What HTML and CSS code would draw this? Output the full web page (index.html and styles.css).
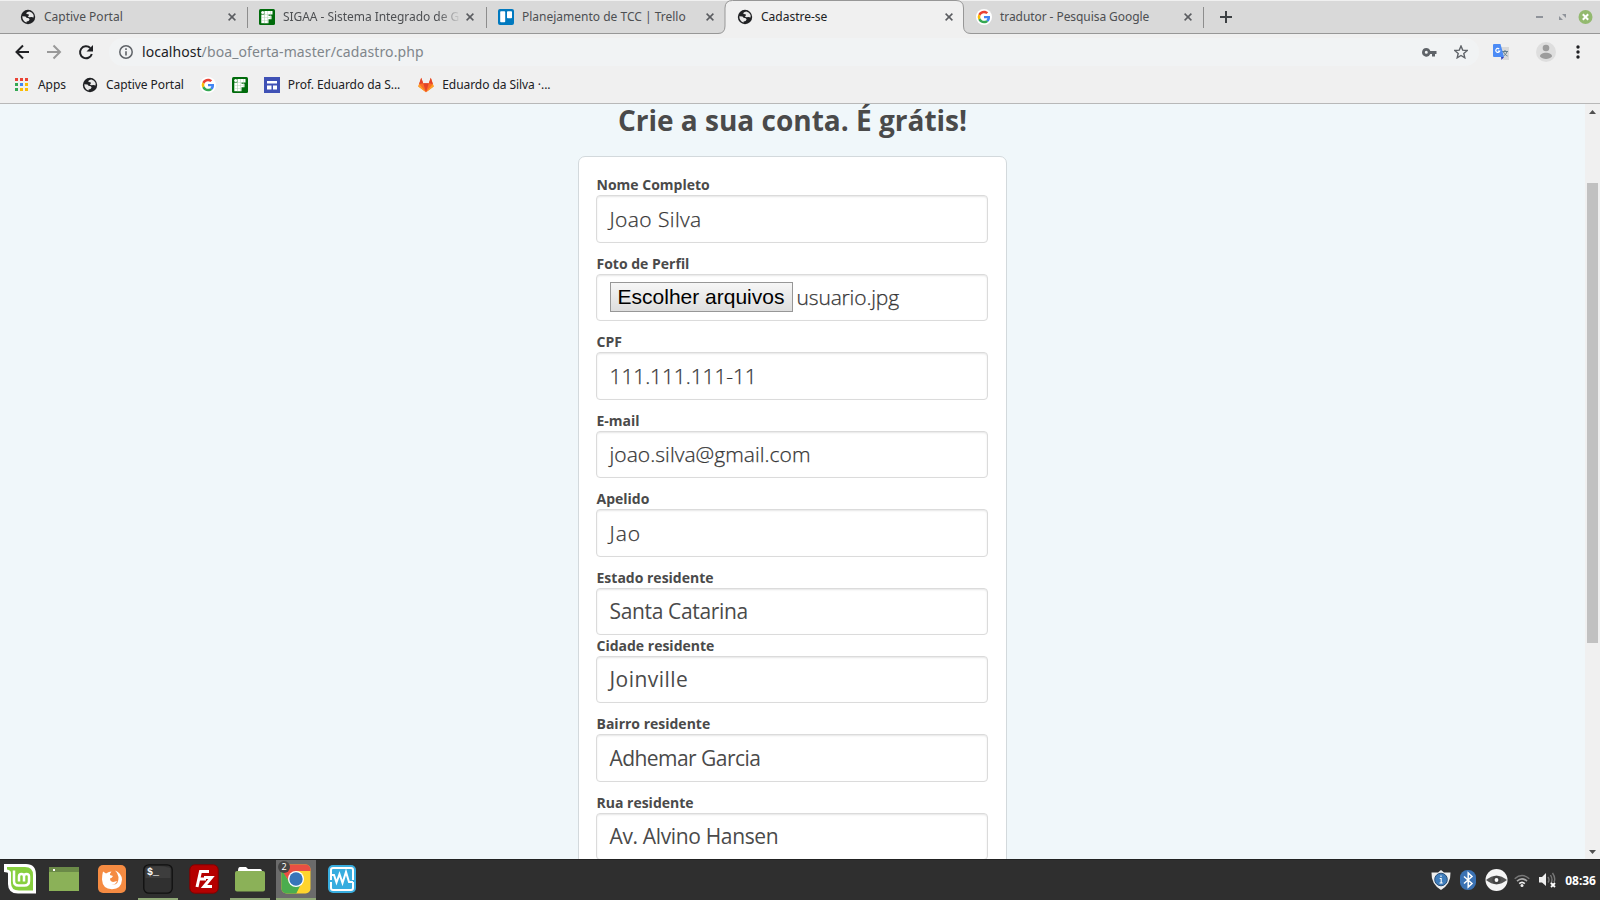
FILE: index.html
```html
<!DOCTYPE html>
<html lang="pt-BR">
<head>
<meta charset="utf-8">
<title>Cadastre-se</title>
<link rel="stylesheet" href="styles.css">
</head>
<body>
<svg class="defs" width="0" height="0">
  <symbol id="globe" viewBox="0 0 16 16"><circle cx="8" cy="8" r="7.200" fill="#202124"/><path d="M9.300 2.500C6.800 3 6 4 6.500 5L8.500 5.200 9 6.300 7.800 7.400 9.500 8.300 11.500 8 13.600 8.500V6L12 3.800zM2.300 7.300L5.500 7.400 6.500 8.800 8.800 9.200 9.600 10.600 8.600 12 6.600 12.400 6.600 13.600C4 12.800 2.200 10.500 2.300 7.300z" fill="#e8e8e8"/></symbol>
  <symbol id="if" viewBox="0 0 16 16"><rect width="16" height="16" rx="1.500" fill="#006b0b"/><path d="M5.500 2h8v3.500h-4v1.300h3v3.400h-3v4h-4z" fill="#fff"/><circle cx="3.700" cy="3.500" r="1.600" fill="#fff"/><path d="M2.300 5.700h3.500v8.500H2.300z" fill="#fff"/><path d="M5.500 2v12M8.500 2v12M2.500 5.500h8M2.500 8.500h9M2.500 11.500h7M11.500 2v8" stroke="#a8cfac" stroke-width=".4"/></symbol>
  <symbol id="google" viewBox="0 0 48 48"><circle cx="24" cy="24" r="24" fill="#fff"/><g transform="translate(5 5) scale(.79)"><path fill="#EA4335" d="M24 9.500c3.540 0 6.710 1.220 9.210 3.600l6.850-6.850C35.900 2.380 30.470 0 24 0 14.620 0 6.510 5.380 2.560 13.220l7.980 6.190C12.430 13.720 17.740 9.500 24 9.500z"/><path fill="#4285F4" d="M46.980 24.550c0-1.570-.15-3.090-.38-4.550H24v9.020h12.940c-.58 2.960-2.260 5.480-4.780 7.180l7.730 6c4.510-4.180 7.090-10.360 7.090-17.650z"/><path fill="#FBBC05" d="M10.530 28.590A14.500 14.500 0 0 1 10.530 19.410l-7.980-6.190A24 24 0 0 0 2.560 34.780z"/><path fill="#34A853" d="M24 48c6.480 0 11.930-2.130 15.890-5.810l-7.730-6c-2.150 1.450-4.920 2.300-8.160 2.300-6.260 0-11.570-4.220-13.470-9.910l-7.980 6.190C6.510 42.620 14.620 48 24 48z"/></g></symbol>
  <symbol id="close" viewBox="0 0 8 8"><path d="M.6.600l6.800 6.800M7.400.600L.6 7.400" stroke="#5a5c60" stroke-width="1.500"/></symbol>
</svg>

<header class="browser">
  <div class="tabs">
    <div class="tab"><svg class="fav"><use href="#globe"/></svg><span class="tab-title">Captive Portal</span><svg class="x"><use href="#close"/></svg></div>
    <div class="tab"><svg class="fav"><use href="#if"/></svg><span class="tab-title long">SIGAA - Sistema Integrado de G</span><svg class="x"><use href="#close"/></svg></div>
    <div class="tab plain"><svg class="fav" viewBox="0 0 16 16"><rect width="16" height="16" rx="2" fill="#0079bf"/><rect x="2.200" y="2.200" width="5" height="11" rx=".8" fill="#fff"/><rect x="9" y="2.200" width="5" height="7" rx=".8" fill="#fff"/></svg><span class="tab-title">Planejamento de TCC | Trello</span><svg class="x"><use href="#close"/></svg></div>
    <div class="tab active"><svg class="shape" viewBox="0 0 253 34"><path d="M0 34V33.500Q7 33.500 7 26V8Q7 .5 14.500.5H238Q245.500.500 245.500 8V26Q245.500 33.500 253 33.500V34z" fill="#f0f0f0"/><path d="M0 33.500Q7 33.500 7 26V8Q7 .5 14.500.5H238Q245.500.500 245.500 8V26Q245.500 33.500 253 33.500" fill="none" stroke="#979797"/></svg><svg class="fav"><use href="#globe"/></svg><span class="tab-title">Cadastre-se</span><svg class="x"><use href="#close"/></svg></div>
    <div class="tab"><svg class="fav"><use href="#google"/></svg><span class="tab-title search">tradutor - Pesquisa Google</span><svg class="x"><use href="#close"/></svg></div>
    <svg class="plus" viewBox="0 0 12 12"><path d="M6 0v12M0 6h12" stroke="#3c4043" stroke-width="2"/></svg>
    <svg class="winctl" width="60" height="18" viewBox="0 0 60 18"><path d="M2 9h7" stroke="#8f939a" stroke-width="2"/><path d="M28 6h4v4zM25 8v4h4z" fill="#8f939a"/><circle cx="51.500" cy="9" r="7" fill="#93b96f"/><path d="M48.800 6.300l5.400 5.400M54.200 6.300l-5.400 5.400" stroke="#fff" stroke-width="2"/></svg>
  </div>
  <div class="toolbar">
    <svg class="nav" width="82" height="16" viewBox="0 0 82 16" fill="none" stroke-width="2"><path d="M15 8H2.500M9 1.500L2.500 8 9 14.500" stroke="#202124"/><path d="M33 8h12.500M39.500 1.500L46 8l-6.500 6.500" stroke="#999"/><path d="M76.300 4A6 6 0 1 0 77.800 10" stroke="#202124"/><path d="M79 1v6.500h-6.500z" fill="#202124"/></svg>
    <div class="omnibox">
      <svg width="14" height="14" viewBox="0 0 14 14"><circle cx="7" cy="7" r="6.200" fill="none" stroke="#5f6368" stroke-width="1.500"/><path d="M7 6.200v4.300M7 3.300v1.600" stroke="#5f6368" stroke-width="1.600"/></svg>
      <span class="url"><b>localhost</b>/boa_oferta-master/cadastro.php</span>
      <svg class="key" width="15" height="9" viewBox="0 0 15 9"><path fill="#5f6368" fill-rule="evenodd" d="M4.300 0A4.300 4.300 0 0 1 8.300 3H14.500V6H13V8.500H10V6H8.300A4.300 4.300 0 1 1 4.300 0zM4.300 2.800a1.500 1.500 0 1 0 0 3 1.500 1.500 0 0 0 0-3z"/></svg>
      <svg width="14" height="14" viewBox="0 0 14 14"><path d="M7 1l1.700 4.100 4.500.4-3.400 2.900 1 4.400L7 10.500l-3.800 2.300 1-4.400L.8 5.500l4.500-.4z" fill="none" stroke="#5f6368" stroke-width="1.400"/></svg>
    </div>
    <svg class="trans" width="16" height="16" viewBox="0 0 16 16"><path d="M6 3h10v13H10z" fill="#d9d9d9"/><path d="M9 7.500h6M12 6v1.500M14 7.500c-.5 2-2 3.700-3.500 4.500M10.500 8c1 2 2.500 3.500 4 4" stroke="#607d8b" fill="none"/><path d="M1 0h6.500L11 13H1Q0 13 0 12V1Q0 0 1 0z" fill="#4c8bf5"/><path d="M8 13h3l-2.500 3z" fill="#3040b8"/><path d="M6.200 5A2 2 0 1 0 6.700 7H4.800" fill="none" stroke="#fff" stroke-width="1.200"/></svg>
    <i class="divider"></i>
    <svg class="avatar" width="20" height="20" viewBox="0 0 20 20"><circle cx="10" cy="10" r="10" fill="#dedede"/><circle cx="10" cy="6" r="3.300" fill="#9c9c9c"/><path d="M4 14.500c0-5 12-5 12 0-2.500 3.300-9.500 3.300-12 0z" fill="#9c9c9c"/></svg>
    <svg width="4" height="14" viewBox="0 0 4 14" fill="#202124"><circle cx="2" cy="2" r="1.700"/><circle cx="2" cy="7" r="1.700"/><circle cx="2" cy="12" r="1.700"/></svg>
  </div>
  <nav class="bookmarks">
    <span class="bm apps"><svg width="13" height="13" viewBox="0 0 13 13"><path d="M0 0h3v3H0zM5 0h3v3H5zM10 0h3v3h-3z" fill="#ea4335"/><path d="M0 5h3v3H0z" fill="#34a853"/><path d="M5 5h3v3H5z" fill="#4285f4"/><path d="M10 5h3v3h-3z" fill="#fbbc05"/><path d="M0 10h3v3H0z" fill="#34a853"/><path d="M5 10h3v3H5zM10 10h3v3h-3z" fill="#fbbc05"/></svg>Apps</span>
    <span class="bm"><svg width="16" height="16"><use href="#globe"/></svg>Captive Portal</span>
    <span class="bm"><svg width="16" height="16"><use href="#google"/></svg></span>
    <span class="bm"><svg width="16" height="16"><use href="#if"/></svg></span>
    <span class="bm"><svg width="16" height="16" viewBox="0 0 16 16"><path d="M0 0h16v16H0z" fill="#3f51b5"/><path d="M3 4h10v2.500H3zM3 8.500h4.500v4H3zM9 8.500h4v4H9z" fill="#fff"/></svg>Prof. Eduardo da S...</span>
    <span class="bm gitlab"><svg width="16" height="16" viewBox="0 0 16 16"><path d="M8 15.300L.3 9.500 3.200.700 5.200 6.300h5.600L12.800.700l2.900 8.800z" fill="#fc6d26"/><path d="M8 15.300L5.200 6.300h5.600z" fill="#e24329"/><path d="M8 15.300L.3 9.500l.8-2.400zM8 15.300l7.700-5.800-.8-2.400z" fill="#fca326"/><path d="M3.200.700L1.100 7.100 5.200 6.300zM12.800.700l2.100 6.400-4.100-.8z" fill="#e24329"/></svg>Eduardo da Silva ·...</span>
  </nav>
</header>

<main class="viewport">
  <section class="page">
    <h1>Crie a sua conta. É grátis!</h1>
    <form class="card">
      <label>Nome Completo</label><div class="field light name"><span>Joao Silva</span></div>
      <label>Foto de Perfil</label><div class="field light photo"><span class="pick">Escolher arquivos</span><span>usuario.jpg</span></div>
      <label>CPF</label><div class="field light cpf"><span>111.111.111-11</span></div>
      <label>E-mail</label><div class="field light email"><span>joao.silva@gmail.com</span></div>
      <label>Apelido</label><div class="field light nick"><span>Jao</span></div>
      <label>Estado residente</label><div class="field tight state"><span>Santa Catarina</span></div>
      <label>Cidade residente</label><div class="field city"><span>Joinville</span></div>
      <label>Bairro residente</label><div class="field district"><span>Adhemar Garcia</span></div>
      <label>Rua residente</label><div class="field street"><span>Av. Alvino Hansen</span></div>
    </form>
  </section>
  <aside class="scroll">
    <svg width="7" height="4" viewBox="0 0 7 4"><path d="M0 4L3.500 0 7 4z" fill="#505050"/></svg>
    <div class="thumb"></div>
    <svg width="7" height="4" viewBox="0 0 7 4"><path d="M0 0L3.500 4 7 0z" fill="#505050"/></svg>
  </aside>
</main>

<footer class="taskbar">
  <div class="slot"><svg width="32" height="30" viewBox="0 0 32 30"><path d="M0 0H22Q32 0 32 11V29.500H14Q4 29.500 4 20V9.500Q4 8 0 8z" fill="#fff"/><path d="M3 3H21Q29 3 29 11V26.500H15Q7 26.500 7 19V9Q7 6 3 5.500z" fill="#87cf3e"/><path d="M10 6.500V17Q10 21.500 14.500 21.500H20.500Q25 21.500 25 17V12.500Q25 10 22.500 10T20 12.500V17.500M20 12.500Q20 10 17.500 10T15 12.500V17.500" fill="none" stroke="#fff" stroke-width="2.500"/></svg></div>
  <div class="slot desk"><svg width="30" height="24" viewBox="0 0 30 24"><path d="M0 0h30v24H0z" fill="#8bb158"/><path d="M0 0h30v5H0z" fill="#6b8a48"/><path d="M4 2h2v2H4z" fill="#fff"/></svg></div>
  <div class="slot"><svg width="30" height="30" viewBox="0 0 30 30"><rect x="1" y="1" width="28" height="28" rx="5" fill="#f58b42"/><path d="M6 7.500L9 9.500Q12 7.500 14.500 7.500 12.500 9.500 13 11L16 12Q15 14 13 14.500 13 17.500 16 18 18.500 17.500 20 17 19 20.500 14.500 20.500 22 21.500 21.500 13 21 9 18 6.500 24.500 9 25 15.500 24.500 25 15 25.300 5.500 25 5 15.500 5 11 6 7.500z" fill="#fff"/></svg></div>
  <div class="slot run"><svg width="30" height="30" viewBox="0 0 30 30"><rect x=".8" y=".8" width="28.400" height="28.400" rx="5" fill="#303030" stroke="#101010" stroke-width="1.300"/><path d="M2.500 4Q15 0 27.500 4v10H2.500z" fill="#3d3d3d"/><text x="4" y="11" font-family="Liberation Mono" font-size="10" font-weight="bold" fill="#fff">$_</text></svg></div>
  <div class="slot"><svg width="30" height="30" viewBox="0 0 30 30"><rect x=".8" y=".8" width="28.400" height="28.400" rx="5" fill="#b50000" stroke="#810000"/><path d="M8 23L11.500 7.500H20M9.500 15h7.500M15 13.500H22.500L15 22.500H23" fill="none" stroke="#fff" stroke-width="3"/></svg></div>
  <div class="slot run"><svg width="30" height="26" viewBox="0 0 30 26"><path d="M3 5Q3 1 5 1h6l2 2h12q2 0 2 3v3H3z" fill="#fff"/><rect y="5" width="30" height="20.500" rx="2" fill="#8bb158"/></svg></div>
  <div class="slot run current"><svg width="30" height="30" viewBox="0 0 30 30"><defs><clipPath id="sq"><rect x=".5" y=".5" width="29" height="29" rx="5"/></clipPath></defs><g clip-path="url(#sq)"><path d="M0 0h30v30H0z" fill="#ffd42d"/><path d="M0 0h30v7H15L8 17-2 4z" fill="#e94f43"/><path d="M0 5L9 19l11 1-6 12H0z" fill="#4bad4e"/></g><circle cx="15" cy="15" r="8" fill="#fff"/><circle cx="15" cy="15" r="6.700" fill="#3875b9"/></svg><span class="badge">2</span></div>
  <div class="slot"><svg width="28" height="28" viewBox="0 0 28 28"><rect width="28" height="28" rx="5" fill="#38addf"/><path d="M3 15V5Q3 3 5 3H23Q25 3 25 5V15M3 17V23Q3 25 5 25H23Q25 25 25 23V17" fill="none" stroke="#fff" stroke-width="2"/><path d="M3 10H6L8.500 17.500 11.500 9 14.500 18 18 7 21 17H25" fill="none" stroke="#fff" stroke-width="2"/></svg></div>
  <div class="tray">
    <svg width="20" height="20" viewBox="0 0 20 20"><path d="M10 0L13 2.500 19.500 2.500Q20 14 10 20 0 14 .5 2.500L7 2.500z" fill="#eee"/><circle cx="10" cy="9.500" r="6.300" fill="#3f7dbb" stroke="#274d77"/><path d="M8.700 8.500H10.200V12.500M8.500 13H11.700M10 5.500v1.500" stroke="#fff" stroke-width="1.100" fill="none"/></svg>
    <svg width="16" height="20" viewBox="0 0 16 20"><rect width="16" height="20" rx="7.500" fill="#3b72b4"/><path d="M4 6.500L12 13.500 8.200 17V3L12 6.500 4 13.500" fill="none" stroke="#fff" stroke-width="1.500"/></svg>
    <svg class="eye" width="23" height="22" viewBox="0 0 23 22"><circle cx="11.500" cy="11" r="11" fill="#f5f5f5"/><path d="M1 11Q11.500 2.500 22 11 11.500 19.500 1 11z" fill="#555"/><circle cx="11.500" cy="11" r="4.200" fill="#444"/><circle cx="11.500" cy="11" r="1.900" fill="#fff"/></svg>
    <svg width="16" height="13" viewBox="0 0 16 13" fill="none"><path d="M.7 4.700Q8-1.800 15.300 4.700" stroke="#777" stroke-width="1.500"/><path d="M3 7.200Q8 2.500 13 7.200" stroke="#aaa" stroke-width="1.600"/><path d="M5.200 9.600Q8 7 10.800 9.600" stroke="#eee" stroke-width="1.700"/><circle cx="8" cy="11.500" r="1.500" fill="#eee"/></svg>
    <svg width="17" height="16" viewBox="0 0 17 16"><path d="M0 5h3L7 1v13L3 10.500H0z" fill="#eee"/><path d="M9 5q2 3 0 5.500M11.500 3q3 5 0 9M13.500 1q3.500 5 1.500 9" fill="none" stroke="#777" stroke-width="1.400"/><path d="M12 11l4 4M16 11l-4 4" stroke="#fff" stroke-width="1.800"/></svg>
    <span class="clock">08:36</span>
  </div>
</footer>
</body>
</html>
```
FILE: styles.css
```css
* { box-sizing: border-box; }
body {
  margin: 0;
  width: 1600px;
  height: 900px;
  overflow: hidden;
  display: flex;
  flex-direction: column;
  font-family: "Noto Sans", "Open Sans", sans-serif;
  font-size: 12px;
  color: #202124;
}
svg { display: block; flex: none; }
.defs { position: absolute; }

/* Browser chrome */
.browser { height: 104px; background: #f0f0f0; border-bottom: 1px solid #b8b8b8; flex: none; }
.tabs {
  height: 34px;
  display: flex;
  align-items: center;
  padding-left: 9px;
  background: #d9d9d9;
  border-top: 1px solid #f0f0f0;
  border-bottom: 1px solid #979797;
}
.tab {
  position: relative;
  width: 239px;
  height: 32px;
  padding: 0 12px 0 11px;
  display: flex;
  align-items: center;
  color: #4d4f52;
}
.tab::after { content: ""; position: absolute; right: 0; top: 6px; width: 1px; height: 21px; background: #8d8d8d; }
.tab.plain::after, .tab.active::after { display: none; }
.tab > * { position: relative; }
.tab .shape { position: absolute; left: -8px; top: -1px; width: 253px; height: 34px; }
.tab.active { color: #202124; }
.fav { width: 16px; height: 16px; margin-right: 8px; }
.tab-title { flex: 1; padding-bottom: 2px; white-space: nowrap; }
.tab-title.long { width: 179px; flex: none; margin-right: 4px; letter-spacing: -.05px; -webkit-mask-image: linear-gradient(90deg, #000 155px, transparent 178px); mask-image: linear-gradient(90deg, #000 155px, transparent 178px); }
.tab-title.search { letter-spacing: -.07px; }
.x { width: 8px; height: 8px; }
.plus { width: 12px; height: 12px; margin-left: 16px; }
.winctl { margin-left: auto; margin-right: 6px; }

.toolbar { height: 36px; padding: 4px 20px 4px 14px; display: flex; align-items: center; }
.omnibox {
  flex: none;
  width: 1370px;
  height: 28px;
  margin-left: 13px;
  padding: 0 11px 0 10px;
  border-radius: 14px;
  background: #f1f3f4;
  display: flex;
  align-items: center;
}
.url { flex: 1; margin-left: 9px; padding-bottom: 2px; font-size: 14px; letter-spacing: .11px; color: #80868b; }
.url b { font-weight: 400; color: #202124; letter-spacing: .05px; }
.key { margin-right: 17px; }
.trans { margin-left: 14px; }
.divider { width: 1px; height: 16px; background: #bbb; margin-left: 15px; }
.avatar { margin: 0 20px 0 12px; }

.bookmarks { height: 29px; display: flex; align-items: center; padding-left: 15px; gap: 16px; letter-spacing: -.06px; }
.bm { display: flex; align-items: center; gap: 8px; white-space: nowrap; }
.bm.apps { gap: 10px; }
.bm.gitlab { margin-left: 2px; }

/* Sign-up page */
.viewport { height: 755px; display: flex; overflow: hidden; background: #f0f7fa; flex: none; }
.page { flex: 1; display: flex; flex-direction: column; align-items: center; color: #4a4a4a; }
h1 { flex: none; margin: 0; height: 52px; line-height: 32px; font-family: "Open Sans", sans-serif; font-size: 28px; font-weight: 700; white-space: nowrap; }
.card {
  width: 429px;
  flex: none;
  padding: 18px 17px;
  background: #fff;
  border: 1px solid #d3d9dc;
  border-radius: 7px;
  font-family: "Open Sans", sans-serif;
}
label { display: block; height: 20px; padding-left: .5px; line-height: 20px; font-size: 14px; font-weight: 700; }
.field {
  height: 47.500px;
  width: 392px;
  margin-bottom: 11px;
  padding: 0 13px 0 12.500px;
  display: flex;
  align-items: center;
  border: 1px solid #dbdbdb;
  border-radius: 4px;
  box-shadow: inset 0 1px 2px rgba(10, 10, 10, .1);
  font-family: "Open Sans", sans-serif;
  font-size: 21px;
  white-space: nowrap;
}
.field.light { font-weight: 300; color: #363636; -webkit-text-stroke: .25px #363636; }
.field.tight { margin-bottom: .5px; }
.name { letter-spacing: .4px; }
.photo { letter-spacing: -.15px; padding-bottom: 1px; }
.cpf { letter-spacing: -.1px; }
.email { letter-spacing: .05px; }
.nick { letter-spacing: 1px; }
.state { letter-spacing: -.35px; }
.city { letter-spacing: .45px; }
.district { letter-spacing: -.55px; }
.street { letter-spacing: -.35px; }
.pick {
  height: 30px;
  width: 183px;
  margin-right: 4px;
  text-align: center;
  border: 1px solid #979797;
  background: linear-gradient(#f6f6f6, #dedede);
  color: #000;
  font: 400 21px/28px "Liberation Sans", sans-serif;
  letter-spacing: 0;
  -webkit-text-stroke: 0;
}
.scroll { width: 15px; background: #f0f0f0; display: flex; flex-direction: column; align-items: center; padding: 6px 0 5px; }
.thumb { width: 11px; height: 460px; margin: 69px 0 auto; background: #c1c1c1; }

/* Desktop panel */
.taskbar { height: 41px; flex: none; background: #2f2f2f; border-top: 1px solid #222; display: flex; align-items: stretch; gap: 6px; }
.slot { position: relative; width: 40px; display: flex; align-items: center; justify-content: center; border-bottom: 2px solid transparent; }
.slot.desk { margin: 0 2px 0 -2px; }
.slot.run { border-bottom-color: #8fa876; }
.slot.current { background-color: #6b6b6b; }
.badge { position: absolute; left: 2px; top: 1px; width: 12px; height: 12px; border-radius: 6px; background: #444; color: #fff; font-size: 9px; line-height: 12px; text-align: center; }
.tray { margin-left: auto; padding-right: 4px; display: flex; align-items: center; gap: 9px; }
.eye { margin-right: -3px; }
.clock { color: #fff; font-size: 12px; font-weight: 700; }
```
